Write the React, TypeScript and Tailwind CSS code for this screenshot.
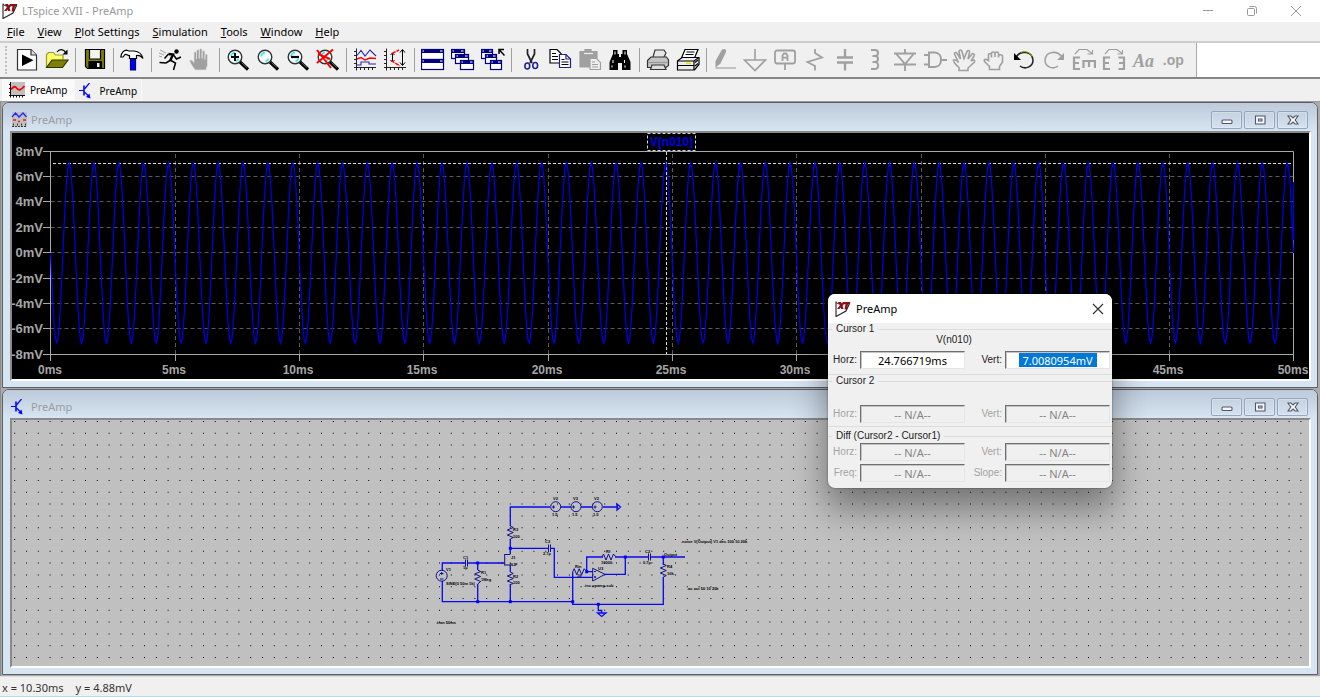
import React from "react";

const G = "#a0a0a0";

function Glyph({ children }: { children: React.ReactNode }) {
  return (
    <svg viewBox="0 0 24 24" className="h-6 w-6 shrink-0" fill="none" stroke="#000" strokeWidth="1.2" aria-hidden="true">
      {children}
    </svg>
  );
}

function Lens() {
  return (
    <>
      <circle cx="9" cy="9" r="6.8" fill="#f4ffff" stroke="#333" strokeWidth="1.4" />
      <path d="M5 8.5C5.400 6 7 5 9 4.600M12.500 10.500c-.5 1.500-1.500 2.300-3 2.800" stroke="#3fe0e8" strokeWidth="1.500" />
      <path d="M14 14L22 21.500" strokeWidth="3.200" />
      <path d="M15.500 14.500L21 19.700" stroke="#777" strokeWidth=".8" />
    </>
  );
}

function MiniWindow({ x, y, w, h }: { x: number; y: number; w: number; h: number }) {
  return (
    <>
      <rect x={x + 0.5} y={y + 0.5} width={w} height={h} fill="#fff" stroke="#000080" />
      <rect x={x} y={y} width={w + 1} height="4" fill="#000080" stroke="none" />
      <path d={`M${x + 1.5} ${y + 2}h1.500M${x + w - 3} ${y + 2}h2.500`} stroke="#fff" strokeWidth="1.200" />
    </>
  );
}

const AXES = "M3.500 0.500V22.500M1 19.500H23M1 3.500h2M1 7.500h2M1 11.500h2M1 15.500h2M7.500 19v3M11.500 19v3M15.500 19v3M19.500 19v3";

const icons: Record<string, React.ReactNode> = {
  Run: (
    <>
      <path d="M2.500 1.500H16L21.500 7V22H2.500Z" fill="#fff" stroke="#333" />
      <path d="M16 1.500V7h5.500" fill="#ddd" stroke="#333" />
      <path d="M7 6.500v11.500L18.500 12.300Z" fill="#000" stroke="none" />
    </>
  ),
  Open: (
    <>
      <path d="M1.500 19V6.500l2-2h5l2 2.500H18v4.500" fill="#ffff66" stroke="#999933" />
      <path d="M1.500 19.500L7 12H23L17.500 19.500Z" fill="#808000" stroke="#333300" />
      <path d="M12 4c2.500-3.500 6.500-3 9 .8" />
      <path d="M22.500 1.500v5h-5Z" fill="#000" stroke="none" />
    </>
  ),
  Save: (
    <>
      <path d="M2.500 1.500H21.500V20.500H4.500L2.500 18.500Z" fill="#808000" />
      <path d="M6.500 1.500h11v9.500h-11Z" fill="#f4f4f4" />
      <path d="M6 13.500h12.500V20.500H6Z" fill="#000" />
      <path d="M14 15h2.500v4H14Z" fill="#eee" stroke="none" />
    </>
  ),
  "Control Panel": (
    <>
      <path d="M10.500 10.500h5V22h-5Z" fill="#0000e0" stroke="#0000a0" />
      <path d="M.800 9C1.500 4.500 4 2.500 6.500 2.200L9 3h5c5 .5 8 3 9 7.500-2-2.700-4-3.500-6.500-3v3h-7v-3C7.500 8 7.500 6 5 6.500L3 9Z" fill="#fff" />
    </>
  ),
  Simulate: (
    <>
      <circle cx="18.500" cy="3.500" r="2.200" fill="#000" stroke="none" />
      <path d="M10.500 6L15 6.500L12 13" strokeWidth="2.400" />
      <path d="M10.500 6L6.500 10.500M15.500 7l3 4 4.500-2M12 12.500L8 15 1.500 14.500M13 12.500l4.500 2.500L15.500 22" strokeWidth="1.500" />
      <path d="M2 2l6 3M1 5l5 2M1 8l3 1" stroke={G} strokeWidth="1" />
    </>
  ),
  Halt: (
    <path d="M7 22C5 19 2 15 1.500 12.500c1.500-1 2.500-.5 4.500 2V5c0-1.800 2.500-1.800 2.500 0V11V3c0-1.800 2.800-1.800 2.800 0V10.500V2c0-1.800 2.800-1.800 2.800 0V10.500V4c0-1.800 2.800-1.800 2.800 0V11.500V7c.5-1.500 2.600-1 2.600.5V17l-1.500 5Z" fill={G} stroke="#e4e4e4" strokeWidth=".7" />
  ),
  "Zoom In": (
    <>
      <Lens />
      <path d="M5 9h8M9 5v8" strokeWidth="2" />
    </>
  ),
  Zoom: <Lens />,
  "Zoom Out": (
    <>
      <Lens />
      <path d="M5 9h8" strokeWidth="2.200" />
    </>
  ),
  "Zoom to Fit": (
    <>
      <Lens />
      <path d="M1 2L15 20M17 1.500L1 15M2 6l12 5" stroke="#f00" strokeWidth="2" />
    </>
  ),
  "Autorange Y": (
    <>
      <path d={AXES} stroke="#222" strokeWidth="1" />
      <path d="M4 7.500l4-5 4 5.500 5-6 6 6M4 17h4v-3h8v2h7" stroke="#2828b8" strokeWidth="1.100" />
      <path d="M4 11l4-1.500 4 2.500 5-2 6 .5" stroke="#f00" strokeWidth="1.400" />
    </>
  ),
  "Plot Limits": (
    <>
      <path d={AXES} stroke="#222" strokeWidth="1" />
      <path d="M19.500 2v15M17 4.500l2.500-3 2.500 3M17 14.500l2.500 3 2.500-3M9.500 5v9M7.500 7l2-2 2 2M7.500 12l2 2 2-2" strokeWidth="1" />
      <path d="M9 5.500L16 2M8 12.500l9 5.500" stroke="#f00" strokeWidth="1.400" strokeDasharray="4 1" />
    </>
  ),
  "Tile Windows": (
    <>
      <MiniWindow x={0} y={1} w={22} h={10} />
      <MiniWindow x={0} y={11} w={22} h={10} />
    </>
  ),
  "Cascade Windows": (
    <>
      <MiniWindow x={0} y={1} w={13} h={9} />
      <MiniWindow x={4} y={6} w={13} h={9} />
      <MiniWindow x={9} y={12} w={13} h={9} />
    </>
  ),
  "Close Windows": (
    <>
      <MiniWindow x={0} y={1} w={11} h={9} />
      <MiniWindow x={4} y={6} w={11} h={9} />
      <MiniWindow x={9} y={12} w={11} h={9} />
      <path d="M18 6V1.500h5M18 1.500l5.500 6" strokeWidth="1.500" />
    </>
  ),
  Cut: (
    <>
      <path d="M8.500 1v5l4.500 9M15.500 1v5L11 15" stroke="#222" strokeWidth="1.700" />
      <ellipse cx="8.300" cy="18" rx="2.400" ry="3" stroke="#20209a" strokeWidth="1.600" />
      <ellipse cx="16.200" cy="17.500" rx="2.400" ry="3" stroke="#20209a" strokeWidth="1.600" />
    </>
  ),
  Copy: (
    <>
      <path d="M2 1.500h7l4 4V15H2Z" fill="#fff" />
      <path d="M4 5.500h4M4 8.500h6M4 11.500h6" strokeWidth="1" />
      <path d="M11.500 6.500h6.500l4.500 4.500v8.500H11.500Z" fill="#fff" stroke="#20208c" />
      <path d="M18 6.500V11h4.500" stroke="#20208c" />
      <path d="M13.500 11.500h3M13.500 14h7M13.500 16.500h7" strokeWidth="1" />
    </>
  ),
  Paste: (
    <>
      <path d="M2 3.500h5V1.500h6v2h6V19H2Z" fill={G} stroke={G} />
      <path d="M6 5.500h9" stroke="#eee" />
      <path d="M12 10.500h6.500l4 4v7H12Z" fill="#eee" stroke={G} />
      <path d="M14 14h3M14 16.500h6M14 19h6" stroke={G} strokeWidth="1" />
    </>
  ),
  Find: (
    <>
      <path d="M5 2h4.500v4h1.500V9h2V6h1.500V2H19v4l3.500 8v8H14v-7h-4v7H1.500v-8L5 6Z" fill="#000" stroke="none" />
      <path d="M7 3.500v3M17 3.500v3M5 12v3M16.500 12v3M4 17.500v2M17 17.500v2" stroke="#eee" strokeWidth="1.100" />
    </>
  ),
  Print: (
    <>
      <path d="M7 9L9 2h9l2 3-2 4" fill="#e6e6e6" stroke="#333" />
      <path d="M1.500 12.500L5 9H20.500L22.500 12v5.500l-2.500 2H1.500Z" fill="#c4c4c4" stroke="#333" />
      <path d="M2 14.500h20" stroke="#999" />
      <path d="M6 17h12l2 4.500H4.500Z" fill="#ddd" stroke="#333" />
    </>
  ),
  "Print Preview": (
    <>
      <path d="M5.500 10L9 1.500h13L18.500 10" fill="#fff" />
      <path d="M10.500 4h8M9.500 6.500h8" strokeWidth="1.200" />
      <path d="M1.500 13L6 9.500h17v7L18.500 22h-17Z" fill="#eee" />
      <path d="M1.500 13H18L23 9.500M18 13v9M1.500 17.500H18" />
      <path d="M10 15.300h5" stroke="#e6e600" strokeWidth="1.800" />
      <path d="M19 14.500l3-2.500M19 18l3-2.500" strokeWidth="1.200" />
    </>
  ),
  Wire: (
    <>
      <path d="M8 1.500c2.500-1.500 5 0 4 2.500L6.500 15.500l-5 4V13Z" fill={G} stroke="none" />
      <path d="M1.500 20H22" stroke={G} />
    </>
  ),
  Ground: <path d="M12 1v11M1.500 12h21L12 22.500Z" stroke={G} strokeWidth="1.600" />,
  "Label Net": (
    <>
      <rect x="2" y="2.500" width="20" height="13" rx="2" stroke={G} strokeWidth="1.800" />
      <path d="M9.500 13V7.500l1.500-2h2l1.500 2V13M9.500 9.700h5M12 15.500V22" stroke={G} strokeWidth="1.800" />
    </>
  ),
  Resistor: <path d="M12 1v4l7 4.500L4.500 14 12 18v4.500" stroke={G} strokeWidth="1.800" />,
  Capacitor: <path d="M12 1v8M4 9.500h16M4 14.500h16M12 15v7.500" stroke={G} strokeWidth="2.400" />,
  Inductor: <path d="M8 2h4c4 0 4 6 0 6H9.500H12c4 0 4 6 0 6H9.500H12c4.500 0 4 7 0 7H8" stroke={G} strokeWidth="2" />,
  Diode: <path d="M12 1v5M12 16v7M1 5.500h22M1 16.500h22M3 5.500l9 10.500L21 5.500" stroke={G} strokeWidth="1.900" />,
  Component: <path d="M1 7h5M1 16.500h5M6 4.500h6c8 0 8 14.500 0 14.500H6ZM18 12h6" stroke={G} strokeWidth="2" />,
  Move: <path d="M7 22.500v-3C4 17 1.500 14 1.500 12c2-.8 3.500.5 5 2.500L2.500 6C2.500 4 4.500 4 5.500 6l3 5L7 3.500C7.500 1.500 9.500 1.500 10 3.500l2 7 3-7c1-1.800 3-1 2.500 1L16 11l4-5c1.500-1 3 .5 2 2l-3 5c3-2 4.500-.5 3 1.500L16 20v2.500Z" stroke={G} strokeWidth="1.600" />,
  Drag: <path d="M7.500 21.500V18.500L2.500 13.500C1.500 11.500 3 10.500 6.500 12.500V7c0-2 3-2 3 0v2.500V5.500c0-2 3.500-2 3.500 0v3.500V5.500c0-2 3.500-2 3.500 0v4V8c0-2 4-1.500 4 0v6l-3 4.500v3Z" stroke={G} strokeWidth="1.600" />,
  Undo: (
    <>
      <path d="M4 9C9 2 20 3 21 12c0 7-8 10-13 6" stroke="#222" strokeWidth="1.500" />
      <path d="M9 4.500c4-2 9-.5 11 4" stroke="#a0a000" strokeWidth="1" />
      <path d="M2 5V12h7Z" fill="#000" stroke="none" />
    </>
  ),
  Redo: (
    <>
      <path d="M20 9C15 2 4 3 3 12c0 7 8 10 13 6" stroke={G} strokeWidth="1.500" />
      <path d="M22 5V12h-7Z" fill={G} stroke="none" />
    </>
  ),
  Rotate: (
    <>
      <path d="M8 9.500H2V21h6M2 15h5M11.500 20v-7h11.500v7M17 13v6" stroke={G} strokeWidth="2.200" />
      <path d="M3 6l4-4.500h8l5 4M20.500 2v4h-5" stroke={G} strokeWidth="1.200" />
    </>
  ),
  Mirror: (
    <>
      <path d="M8 9.500H2V21h6M2 15h5M16.500 9.500H22V21h-5.500M22 15h-5" stroke={G} strokeWidth="2.200" />
      <path d="M3 6l4-4.500h8l5 4M20.500 2v4h-5" stroke={G} strokeWidth="1.200" />
    </>
  ),
};

const groups: string[][] = [
  ["Run", "Open"],
  ["Save"],
  ["Control Panel"],
  ["Simulate", "Halt"],
  ["Zoom In", "Zoom", "Zoom Out", "Zoom to Fit"],
  ["Autorange Y", "Plot Limits"],
  ["Tile Windows", "Cascade Windows", "Close Windows"],
  ["Cut", "Copy", "Paste", "Find"],
  ["Print", "Print Preview"],
  ["Wire", "Ground", "Label Net", "Resistor", "Capacitor", "Inductor", "Diode", "Component", "Move", "Drag", "Undo", "Redo", "Rotate", "Mirror"],
];

function Logo() {
  return (
    <svg viewBox="0 0 16 16" className="h-4 w-4 shrink-0" fill="none" aria-hidden="true">
      <path d="M1 .500V15.500L11 10l4-8.500" stroke="#222" strokeWidth="1.100" />
      <path d="M1 1.500L4 3" stroke="#222" />
      <path d="M3 1h3l.8 1.500L8 1h7v2.300h-2L12 8.500H9.500L10.500 3.300H8.800L7.600 5 8.500 8H6L5.500 6.500 4.500 8H2l2.800-3.500Z" fill="#8b1016" />
    </svg>
  );
}

function WaveIcon({ both = false }: { both?: boolean }) {
  return (
    <svg viewBox="0 0 16 16" className="h-4 w-4 shrink-0" fill="none" aria-hidden="true">
      <rect x="1" width="15" height="14" fill="#c0c0c0" />
      {both ? (
        <>
          <path d="M1 14.500h14M2.500 11.500v3M6.500 11.500v3M10.500 11.500v3M14.500 11.500v3" stroke="#333" strokeDasharray="2 1" />
          <path d="M1 5l3.500-4L8 5l4-4 3.500 4" stroke="#2020ff" strokeWidth="1.200" />
          <path d="M2 8h3M7 9.500h2M12 8h3" stroke="#e02020" strokeWidth="1.300" />
        </>
      ) : (
        <>
          <path d="M1.500 0v15.500M0 13.500h16M0 2.500h1M0 6.500h1M0 10.500h1M4.500 13v2.500M7.500 13v2.500M10.500 13v2.500M13.500 13v2.500" stroke="#111" />
          <path d="M2 7.500C5 4 6 4 8 6.500S12 8 15.500 4" stroke="#f00" strokeWidth="1.800" />
        </>
      )}
    </svg>
  );
}

function TransistorIcon() {
  return (
    <svg viewBox="0 0 16 16" className="h-4 w-4 shrink-0" fill="none" stroke="#0000ff" aria-hidden="true">
      <path d="M0 7.500h5M10.500 0L5.500 6M5.500 9l4 4" strokeWidth="1.200" />
      <path d="M5 2.500v10" strokeWidth="1.600" />
      <path d="M11.500 15.500L7 14l3.500-3.500Z" fill="#0000ff" stroke="none" />
    </svg>
  );
}

function CaptionButtons() {
  const shapes: [string, React.ReactNode][] = [
    ["Minimize", <rect key="a" x="3" y="8" width="10" height="3.5" rx="1" />],
    ["Maximize", <path key="b" fillRule="evenodd" d="M3.500 4h9.500v8H3.500ZM6.500 7v2h3.500V7Z" />],
    ["Close", <path key="c" d="M3 4h3l2 2 2-2h3L10.200 8 13 12h-3L8 10 6 12H3l2.800-4Z" />],
  ];
  return (
    <div className="flex gap-0.5">
      {shapes.map(([label, shape]) => (
        <button key={label} aria-label={label} className="flex h-[18px] w-[31px] items-center justify-center rounded-[2px] border border-[#94a5c0] shadow-[inset_0_0_0_1px_rgba(255,255,255,0.25)]">
          <svg viewBox="0 0 16 16" className="h-4 w-4" fill="#f8f8f8" stroke="#4f5768" strokeWidth="1.100" aria-hidden="true">{shape}</svg>
        </button>
      ))}
    </div>
  );
}

function ChildWindow({ icon, children }: { icon: React.ReactNode; children: React.ReactNode }) {
  return (
    <section className="rounded-t-[7px] border border-[#5c5f63] bg-[#d7e4f2] pr-[6px] pb-[6px] pl-[7px]">
      <header className="-mr-[6px] -ml-[7px] flex h-7 items-center justify-between rounded-t-[6px] bg-gradient-to-b from-[#bccad9] to-[#d7e4f2] pt-1.5 pr-[9px] pl-2">
        <div className="flex items-center gap-1 text-[#9a9da2]">
          {icon}
          <h2 className="text-[11px]">PreAmp</h2>
        </div>
        <CaptionButtons />
      </header>
      <div className="border-2 border-t-[#8a8a8a] border-r-white border-b-white border-l-[#8a8a8a]">{children}</div>
    </section>
  );
}

const LEFT = 50.5;
const RIGHT = 1293.5;
const TOP = 151.5;
const STEP_Y = 25.4;
const BOTTOM = 354.5;
const CYCLES = 50;
const SAMPLES = 20;

function wavePoints() {
  const pts: string[] = [];
  for (let i = 0; i <= CYCLES * SAMPLES; i++) {
    const x = LEFT + ((RIGHT - LEFT) * i) / (CYCLES * SAMPLES);
    const y = 253 + 90 * Math.sin((2 * Math.PI * i) / SAMPLES);
    pts.push(`${x.toFixed(2)},${y.toFixed(2)}`);
  }
  return pts.join(" ");
}

function Plot() {
  const volts = ["8mV", "6mV", "4mV", "2mV", "0mV", "-2mV", "-4mV", "-6mV", "-8mV"];
  const times = ["0ms", "5ms", "10ms", "15ms", "20ms", "25ms", "30ms", "35ms", "40ms", "45ms", "50ms"];
  return (
    <svg viewBox="12 133 1297 246" className="block h-auto w-full bg-black font-['Liberation_Sans',Arial,sans-serif] font-bold" role="img" aria-label="V(n010) over time">
      <g stroke="#5a5a5a" fill="none" strokeDasharray="4 3">
        {volts.slice(1, 8).map((v, i) => (
          <path key={v} d={`M${LEFT} ${Math.round(TOP + STEP_Y * (i + 1)) - 0.5}H${RIGHT}`} />
        ))}
        {times.slice(1, 10).map((t, i) => (
          <path key={t} d={`M${Math.round(LEFT + 124.3 * (i + 1)) + 0.5} 154V${BOTTOM}`} />
        ))}
      </g>
      <g stroke="#a8a8a8" fill="none">
        <path d={`M43 ${TOP}H${RIGHT}V361M43 ${BOTTOM}H${RIGHT}M${LEFT} ${TOP}V361`} />
        {volts.slice(1, 8).map((v, i) => (
          <path key={v} d={`M43 ${Math.round(TOP + STEP_Y * (i + 1)) - 0.5}H${LEFT}`} />
        ))}
        {times.slice(1, 10).map((t, i) => (
          <path key={t} d={`M${Math.round(LEFT + 124.3 * (i + 1)) + 0.5} ${BOTTOM}V361`} />
        ))}
      </g>
      <path d="M53 163.500H1293M666.500 152V354" stroke="#d8d8d8" strokeDasharray="3 2" />
      <polyline points={wavePoints()} fill="none" stroke="#0000f0" strokeWidth="1.200" />
      <path d="M1293.500 182V240" stroke="#0000f0" strokeWidth="1.200" />
      <rect x="647.500" y="133.500" width="48" height="17" fill="#000" stroke="#d8d8d8" strokeDasharray="3 2" />
      <text x="671.500" y="146" textAnchor="middle" fontSize="12" fill="#0000e6">V(n010)</text>
      <g fill="#a6a6a6" fontSize="13" textAnchor="end">
        {volts.map((v, i) => (
          <text key={v} x="43" y={Math.round(TOP + STEP_Y * i) + 4}>{v}</text>
        ))}
      </g>
      <g fill="#a6a6a6" fontSize="12" textAnchor="middle">
        {times.map((t, i) => (
          <text key={t} x={Math.round(LEFT + 124.3 * i) - 1} y="374">{t}</text>
        ))}
      </g>
    </svg>
  );
}

const notes: [number, number, string][] = [
  [553, 500, "V2"], [573, 500, "V3"], [594, 500, "V2"],
  [552, 516, "1.5"], [572, 516, "1.5"], [593, 516, "1.5"],
  [513, 531, "R3"], [513, 538, "100"],
  [545, 543, "C3"], [543, 555, "2.7µ"],
  [511, 559, "J1"], [510, 566, "NJF"],
  [463, 559, "C1"], [463, 569, "1µ"],
  [446, 571, "V1"], [446, 585, "SINE(0 50m 1k)"],
  [481, 574, "R1"], [481, 581, "1Meg"],
  [513, 578, "R2"], [513, 584, "100"],
  [575, 568, "Rin"], [577, 577, "1k"],
  [606, 553, "Rf"], [601, 564, "10000."],
  [598, 570, "U3"], [584, 587, ".inc opamp.sub"],
  [645, 553, "C2"], [643, 564, "0.7µ"],
  [664, 556, "Output"], [667, 568, "R4"], [667, 575, "10k."],
  [681, 543, ".noise V(Output) V1 dec 100 10 20k"],
  [687, 590, ".ac oct 50 10 20k"],
  [436, 624, ".tran 50ms"],
];

function Schematic() {
  let dots = "";
  for (let r = 0; r < 21; r++) {
    for (let c = 0; c < 110; c++) {
      dots += `M${(14.2 + 11.8 * c).toFixed(1)} ${(421 + 11.8 * r).toFixed(1)}h1v1h-1z`;
    }
  }
  return (
    <svg viewBox="12 420 1297 246" className="block h-auto w-full bg-[#c0c0c0] font-['Liberation_Sans',Arial,sans-serif] font-bold" role="img" aria-label="Preamplifier schematic">
      <path d={dots} fill="#000" />
      <g fill="none" stroke="#0808f0" strokeWidth="1.300">
        <path d="M442.300 571V563H465M467.500 563H503.700M442.300 581V601.700H572.700M477.700 563V570M477.700 584V601.700M510.300 584V601.700" />
        <path d="M510.300 526V507H550M561 507H571M581 507H592M603 507H618M510.300 539V554M510.300 565V572M510.300 548.300H548M550.500 548.300H554.300V577.300H592.700" />
        <path d="M572.700 571.700V604.300H663.300V577M586.700 571.700V557H603M615 557H648M650.500 557H685M625.300 557V574.300H605M586.700 571.700H592.700M663.300 557V565M598.300 604.300V610.500H601.700V613" />
        <path d="M597.500 613H606L601.700 616.500ZM617 504L620.500 507L617 510Z" />
      </g>
      <g fill="none" stroke="#101090" strokeWidth="1">
        <circle cx="441.700" cy="575.700" r="5.500" />
        <circle cx="555.700" cy="506.700" r="5" />
        <circle cx="576" cy="506.700" r="5" />
        <circle cx="597.300" cy="506.700" r="5" />
        <path d="M552 507h3M553.500 505.500v3M572 507h3M573.500 505.500v3M593.500 507h3M595 505.500v3M440 573.500h3.500M441.700 572v3M440 579h3.500" />
        <path d="M465.500 559.500v7M467.500 559.500v7M548.500 544.500v7.500M550.500 544.500v7.500M648.500 553.500v7M650.500 553.500v7" />
        <path d="M504.700 554v11.500M504.700 554.500h5.600M504.700 565h5.600M501 563h3.700" />
        <path d="M592.700 568.300V581L605 574.300ZM594 571.500h2M594 577h2M595 576v2" />
        <path d="M510.300 526l3 1.500-6 2.500 6 2.500-6 2.500 6 2.500-3 1.500M477.700 570l3 1.500-6 2.500 6 2.500-6 2.500 6 2.500-3 2.500M510.300 572l3 1.500-6 2.500 6 2.500-6 2.500 6 2.500-3 1M663.300 564l3 1.500-6 2.500 6 2.500-6 2.500 6 2.500-3 1.500" />
        <path d="M572.700 571.700l1.500-3 2.500 6 2.500-6 2.500 6 2.500-6 2.500 3M602 557l1.500-3 2.500 6 2.500-6 2.500 6 2.500-6 2.500 3" />
      </g>
      <g fill="#0000ff">
        {[[477.7, 563], [510.3, 548.3], [477.7, 601.7], [510.3, 601.7], [572.7, 601.7], [586.7, 571.7], [625.3, 557], [663.3, 557], [598.3, 604.3]].map(([x, y]) => (
          <rect key={`${x}-${y}`} x={x - 1.5} y={y - 1.5} width="3" height="3" />
        ))}
      </g>
      <g fill="#000" fontSize="4">
        {notes.map(([x, y, t]) => (
          <text key={`${x}-${y}`} x={x} y={y}>{t}</text>
        ))}
      </g>
    </svg>
  );
}

function Field({ id, label, value, disabled = false, selected = false }: { id: string; label: string; value: string; disabled?: boolean; selected?: boolean }) {
  return (
    <>
      <label htmlFor={id} className={disabled ? "text-right text-[#a3a3a3]" : "text-right text-[#222]"}>{label}</label>
      <div className={`flex h-[18px] items-center justify-center border border-t-[#6e6e6e] border-r-[#e6e6e6] border-b-[#e6e6e6] border-l-[#6e6e6e] shadow-[inset_1px_1px_0_#c4c4c4] ${disabled ? "bg-[#f0f0f0]" : "bg-white"}`}>
        <input
          id={id}
          readOnly
          disabled={disabled}
          value={value}
          className={`h-3.5 text-center font-['Noto_Sans','Open_Sans',sans-serif] text-[11px] outline-none ${selected ? "w-[78px] bg-[#0078d7] text-white" : disabled ? "w-full bg-transparent text-[#858585]" : "w-full bg-transparent text-black"}`}
        />
      </div>
    </>
  );
}

const rowClass = "grid grid-cols-[29px_105px_34px_105px] items-center gap-x-[3px]";
const legendClass = "flex items-center gap-1 before:w-1 before:border-t before:border-[#dcdcdc] after:flex-1 after:border-t after:border-[#dcdcdc]";

function CursorDialog() {
  return (
    <div role="dialog" aria-label="PreAmp" className="absolute top-[294px] left-[828px] w-[284px] overflow-hidden rounded-[7px] bg-[#f0f0f0] font-['Liberation_Sans',Arial,sans-serif] text-[10px] leading-3 text-[#222] shadow-[0_18px_34px_2px_rgba(0,0,0,0.4),0_0_2px_rgba(0,0,0,0.5)]">
      <header className="flex h-[29px] items-center justify-between bg-white pr-2 pl-[7px]">
        <div className="flex items-center gap-[5px]">
          <Logo />
          <h2 className="font-['Noto_Sans','Open_Sans',sans-serif] text-[11px] text-black">PreAmp</h2>
        </div>
        <button aria-label="Close">
          <svg viewBox="0 0 12 12" className="h-3 w-3" stroke="#333" strokeWidth="1.200" aria-hidden="true"><path d="M1 1l10 10M11 1L1 11" /></svg>
        </button>
      </header>
      <div role="group" aria-labelledby="g1" className="h-[52px] border-b border-[#dcdcdc]">
        <h3 id="g1" className={legendClass}>Cursor 1</h3>
        <p className="-mt-px pr-8 text-center">V(n010)</p>
        <div className={`${rowClass} pt-[5px]`}>
          <Field id="c1h" label="Horz:" value="24.766719ms" />
          <Field id="c1v" label="Vert:" value="7.0080954mV" selected />
        </div>
      </div>
      <div role="group" aria-labelledby="g2" className="h-[52px] border-b border-[#dcdcdc]">
        <h3 id="g2" className={legendClass}>Cursor 2</h3>
        <div className={`${rowClass} pt-[18px]`}>
          <Field id="c2h" label="Horz:" value="-- N/A--" disabled />
          <Field id="c2v" label="Vert:" value="-- N/A--" disabled />
        </div>
      </div>
      <div role="group" aria-labelledby="g3" className="pt-[3px] pb-1.5">
        <h3 id="g3" className={legendClass}>Diff (Cursor2 - Cursor1)</h3>
        <div className={`${rowClass} gap-y-[3px] pt-px`}>
          <Field id="dh" label="Horz:" value="-- N/A--" disabled />
          <Field id="dv" label="Vert:" value="-- N/A--" disabled />
          <Field id="df" label="Freq:" value="-- N/A--" disabled />
          <Field id="ds" label="Slope:" value="-- N/A--" disabled />
        </div>
      </div>
    </div>
  );
}

export default function App() {
  const menus = ["File", "View", "Plot Settings", "Simulation", "Tools", "Window", "Help"];
  return (
    <div className="relative flex min-h-screen flex-col bg-[#f0f0f0] font-['Noto_Sans','Open_Sans',sans-serif] text-[11px] leading-4 text-[#222]">
      <header className="flex h-[22px] items-center justify-between bg-white pr-[18px] pl-0.5 text-[#999]">
        <div className="flex items-center gap-1">
          <Logo />
          <h1>LTspice XVII - PreAmp</h1>
        </div>
        <div className="flex gap-8">
          <button aria-label="Minimize"><svg viewBox="0 0 12 12" className="h-3 w-3" stroke="#999" aria-hidden="true"><path d="M1 5.500h10" /></svg></button>
          <button aria-label="Restore"><svg viewBox="0 0 12 12" className="h-3 w-3" fill="none" stroke="#999" aria-hidden="true"><rect x="1.500" y="3.500" width="7" height="7" rx="1" /><path d="M3.500 1.500h5q2 0 2 2v5" /></svg></button>
          <button aria-label="Close"><svg viewBox="0 0 12 12" className="h-3 w-3" stroke="#999" aria-hidden="true"><path d="M1 1l10 10M11 1L1 11" /></svg></button>
        </div>
      </header>
      <nav className="flex h-[21px] items-center gap-[13px] border-b-2 border-[#cdcdcd] pl-[7px] text-black">
        {menus.map((m) => (
          <button key={m}><u>{m[0]}</u>{m.slice(1)}</button>
        ))}
      </nav>
      <div className="flex h-9 border-b-2 border-[#868686] bg-white">
        <div role="toolbar" aria-label="Main" className="flex w-[1197px] items-center border-r border-[#a8a8a8] bg-[#f0f0f0] pr-2">
          <div className="mr-1 ml-[5px] h-7 w-[3px] border-l-2 border-dotted border-[#c0c0c0]" />
          {groups.map((g, gi) => (
            <React.Fragment key={gi}>
              {gi > 0 && <div className="flex w-2 justify-center"><div className="h-6 w-px bg-[#a0a0a0]" /></div>}
              {g.map((name) => (
                <button key={name} aria-label={name} className="flex h-[30px] flex-1 basis-0 items-center justify-center"><Glyph>{icons[name]}</Glyph></button>
              ))}
            </React.Fragment>
          ))}
          <button aria-label="Text" className="flex-1 basis-0 pt-0.5 font-['Liberation_Serif',serif] text-[18px] font-bold text-[#a0a0a0] italic">Aa</button>
          <button aria-label="SPICE Directive" className="flex-1 basis-0 font-['Liberation_Sans',Arial,sans-serif] text-[14px] font-bold text-[#a0a0a0]">.op</button>
        </div>
      </div>
      <div role="tablist" className="flex h-[23px] border-b border-[#999] pl-0.5 text-[10px] text-black">
        <button role="tab" aria-selected="true" className="flex items-center gap-[5px] bg-[#fafafa] pr-1.5 pl-[7px]"><WaveIcon />PreAmp</button>
        <button role="tab" aria-selected="false" className="flex items-center gap-[5px] border border-[#f8f8f8] pt-0.5 pr-1 pl-1"><TransistorIcon />PreAmp</button>
      </div>
      <main className="flex flex-1 flex-col gap-px border-l border-[#8c8c8c] bg-[#ababab] pr-0.5 pb-px pl-px">
        <ChildWindow icon={<WaveIcon both />}><Plot /></ChildWindow>
        <ChildWindow icon={<TransistorIcon />}><Schematic /></ChildWindow>
      </main>
      <footer className="flex h-[21px] items-center gap-3 border-t border-b border-t-[#dcdcdc] border-b-[#b9dbe5] pt-0.5 pl-0.5 text-[#333]">
        <span>x = 10.30ms</span>
        <span>y = 4.88mV</span>
      </footer>
      <CursorDialog />
    </div>
  );
}
